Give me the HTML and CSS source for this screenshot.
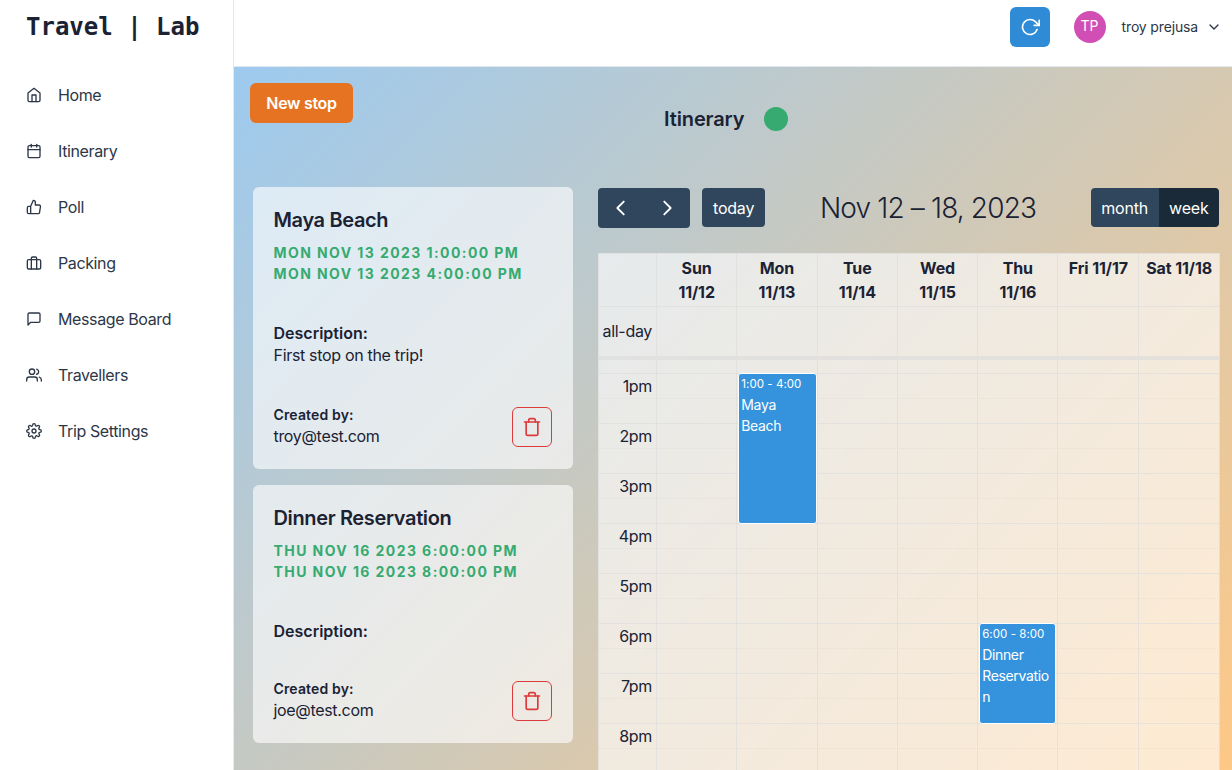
FILE: index.html
```html
<!DOCTYPE html>
<html lang="en">
<head>
    <meta charset="UTF-8">
    <meta name="viewport" content="width=device-width, initial-scale=1.0">
    <title>Travel | Lab</title>
    <link rel="stylesheet" href="styles.css">
</head>
<body>
    <aside class="sidebar">
        <div class="logo">Travel | Lab</div>
        <nav>
            <a class="nav-item">
                <svg class="icon" viewBox="0 0 24 24"><path d="M3 9l9-7 9 7v11a2 2 0 0 1-2 2H5a2 2 0 0 1-2-2z"/><polyline points="9 22 9 12 15 12 15 22"/></svg>
                Home
            </a>
            <a class="nav-item">
                <svg class="icon" viewBox="0 0 24 24"><rect x="3" y="4" width="18" height="18" rx="2"/><line x1="16" y1="2" x2="16" y2="6"/><line x1="8" y1="2" x2="8" y2="6"/><line x1="3" y1="10" x2="21" y2="10"/></svg>
                Itinerary
            </a>
            <a class="nav-item">
                <svg class="icon" viewBox="0 0 24 24"><path d="M14 9V5a3 3 0 0 0-3-3l-4 9v11h11.28a2 2 0 0 0 2-1.7l1.38-9a2 2 0 0 0-2-2.3zM7 22H4a2 2 0 0 1-2-2v-7a2 2 0 0 1 2-2h3"/></svg>
                Poll
            </a>
            <a class="nav-item">
                <svg class="icon" viewBox="0 0 24 24"><rect x="2" y="7" width="20" height="14" rx="2"/><path d="M16 21V5a2 2 0 0 0-2-2h-4a2 2 0 0 0-2 2v16"/></svg>
                Packing
            </a>
            <a class="nav-item">
                <svg class="icon" viewBox="0 0 24 24"><path d="M21 15a2 2 0 0 1-2 2H7l-4 4V5a2 2 0 0 1 2-2h14a2 2 0 0 1 2 2z"/></svg>
                Message Board
            </a>
            <a class="nav-item">
                <svg class="icon" viewBox="0 0 24 24"><path d="M17 21v-2a4 4 0 0 0-4-4H5a4 4 0 0 0-4 4v2"/><circle cx="9" cy="7" r="4"/><path d="M23 21v-2a4 4 0 0 0-3-3.87"/><path d="M16 3.13a4 4 0 0 1 0 7.75"/></svg>
                Travellers
            </a>
            <a class="nav-item">
                <svg class="icon" viewBox="0 0 24 24"><circle cx="12" cy="12" r="3"/><path d="M19.4 15a1.65 1.65 0 0 0 .33 1.82l.06.06a2 2 0 0 1 0 2.83 2 2 0 0 1-2.83 0l-.06-.06a1.65 1.65 0 0 0-1.82-.33 1.65 1.65 0 0 0-1 1.51V21a2 2 0 0 1-2 2 2 2 0 0 1-2-2v-.09A1.65 1.65 0 0 0 9 19.4a1.65 1.65 0 0 0-1.82.33l-.06.06a2 2 0 0 1-2.83 0 2 2 0 0 1 0-2.83l.06-.06a1.65 1.65 0 0 0 .33-1.82 1.65 1.65 0 0 0-1.51-1H3a2 2 0 0 1-2-2 2 2 0 0 1 2-2h.09A1.65 1.65 0 0 0 4.6 9a1.65 1.65 0 0 0-.33-1.82l-.06-.06a2 2 0 0 1 0-2.83 2 2 0 0 1 2.83 0l.06.06a1.65 1.65 0 0 0 1.82.33H9a1.65 1.65 0 0 0 1-1.51V3a2 2 0 0 1 2-2 2 2 0 0 1 2 2v.09a1.65 1.65 0 0 0 1 1.51 1.65 1.65 0 0 0 1.82-.33l.06-.06a2 2 0 0 1 2.83 0 2 2 0 0 1 0 2.83l-.06.06a1.65 1.65 0 0 0-.33 1.82V9a1.65 1.65 0 0 0 1.51 1H21a2 2 0 0 1 2 2 2 2 0 0 1-2 2h-.09a1.65 1.65 0 0 0-1.51 1z"/></svg>
                Trip Settings
            </a>
        </nav>
    </aside>

    <div class="page">
        <header class="topbar">
            <button class="refresh-btn">
                <svg class="icon" viewBox="0 0 24 24"><polyline points="23 4 23 10 17 10"/><path d="M20.49 15a9 9 0 1 1-2.12-9.36L23 10"/></svg>
            </button>
            <div class="avatar">TP</div>
            <span class="user-name">troy prejusa</span>
            <svg class="icon user-chevron" viewBox="0 0 24 24"><polyline points="6 9 12 15 18 9"/></svg>
        </header>

        <main class="main">
            <div class="title-row">
                <button class="new-stop">New stop</button>
                <div class="trip-title">
                    <h1>Itinerary</h1>
                    <span class="status-dot"></span>
                </div>
            </div>

            <div class="content">
                <section class="stops">
                    <article class="stop-card">
                        <h2>Maya Beach</h2>
                        <div class="stop-dates">
                            <div>Mon Nov 13 2023 1:00:00 PM</div>
                            <div>Mon Nov 13 2023 4:00:00 PM</div>
                        </div>
                        <div class="stop-label">Description:</div>
                        <p class="stop-text">First stop on the trip!</p>
                        <div class="stop-footer">
                            <div>
                                <div class="created-label">Created by:</div>
                                <div class="created-email">troy@test.com</div>
                            </div>
                            <button class="delete-btn">
                                <svg class="icon" viewBox="0 0 24 24"><polyline points="3 6 5 6 21 6"/><path d="M19 6v14a2 2 0 0 1-2 2H7a2 2 0 0 1-2-2V6m3 0V4a2 2 0 0 1 2-2h4a2 2 0 0 1 2 2v2"/></svg>
                            </button>
                        </div>
                    </article>

                    <article class="stop-card">
                        <h2>Dinner Reservation</h2>
                        <div class="stop-dates">
                            <div>Thu Nov 16 2023 6:00:00 PM</div>
                            <div>Thu Nov 16 2023 8:00:00 PM</div>
                        </div>
                        <div class="stop-label">Description:</div>
                        <p class="stop-text"></p>
                        <div class="stop-footer">
                            <div>
                                <div class="created-label">Created by:</div>
                                <div class="created-email">joe@test.com</div>
                            </div>
                            <button class="delete-btn">
                                <svg class="icon" viewBox="0 0 24 24"><polyline points="3 6 5 6 21 6"/><path d="M19 6v14a2 2 0 0 1-2 2H7a2 2 0 0 1-2-2V6m3 0V4a2 2 0 0 1 2-2h4a2 2 0 0 1 2 2v2"/></svg>
                            </button>
                        </div>
                    </article>
                </section>

                <section class="calendar">
                    <div class="cal-toolbar">
                        <div class="cal-left">
                            <div class="cal-group">
                                <button class="cal-btn cal-arrow"><svg class="icon" viewBox="0 0 24 24"><polyline points="15 5 8 12 15 19"/></svg></button>
                                <button class="cal-btn cal-arrow"><svg class="icon" viewBox="0 0 24 24"><polyline points="9 5 16 12 9 19"/></svg></button>
                            </div>
                            <button class="cal-btn cal-today">today</button>
                        </div>
                        <h2 class="cal-title">Nov 12 – 18, 2023</h2>
                        <div class="cal-group cal-views">
                            <button class="cal-btn">month</button>
                            <button class="cal-btn active">week</button>
                        </div>
                    </div>

                    <div class="cal-grid">
                        <div class="cal-head">
                            <div class="head-cell"></div>
                            <div class="head-cell">Sun<br>11/12</div>
                            <div class="head-cell">Mon<br>11/13</div>
                            <div class="head-cell">Tue<br>11/14</div>
                            <div class="head-cell">Wed<br>11/15</div>
                            <div class="head-cell">Thu<br>11/16</div>
                            <div class="head-cell">Fri 11/17</div>
                            <div class="head-cell">Sat 11/18</div>
                        </div>
                        <div class="cal-allday">
                            <div class="allday-cell allday-label">all-day</div>
                            <div class="allday-cell"></div>
                            <div class="allday-cell"></div>
                            <div class="allday-cell"></div>
                            <div class="allday-cell"></div>
                            <div class="allday-cell"></div>
                            <div class="allday-cell"></div>
                            <div class="allday-cell"></div>
                        </div>
                        <div class="cal-times">
                            <div class="slot slot-top"></div>
                            <div class="slot hour"><span>1pm</span></div>
                            <div class="slot half"></div>
                            <div class="slot hour"><span>2pm</span></div>
                            <div class="slot half"></div>
                            <div class="slot hour"><span>3pm</span></div>
                            <div class="slot half"></div>
                            <div class="slot hour"><span>4pm</span></div>
                            <div class="slot half"></div>
                            <div class="slot hour"><span>5pm</span></div>
                            <div class="slot half"></div>
                            <div class="slot hour"><span>6pm</span></div>
                            <div class="slot half"></div>
                            <div class="slot hour"><span>7pm</span></div>
                            <div class="slot half"></div>
                            <div class="slot hour"><span>8pm</span></div>
                            <div class="slot half"></div>
                            <div class="slot hour"></div>

                            <div class="day-cols">
                                <div class="day-col"></div>
                                <div class="day-col"></div>
                                <div class="day-col"></div>
                                <div class="day-col"></div>
                                <div class="day-col"></div>
                                <div class="day-col"></div>
                                <div class="day-col"></div>
                                <div class="day-col"></div>
                            </div>
                            <div class="day-cols day-events">
                                <div></div>
                                <div></div>
                                <div class="event-col">
                                    <div class="cal-event event-maya">
                                        <div class="event-time">1:00 - 4:00</div>
                                        <div class="event-title">Maya Beach</div>
                                    </div>
                                </div>
                                <div></div>
                                <div></div>
                                <div class="event-col">
                                    <div class="cal-event event-dinner">
                                        <div class="event-time">6:00 - 8:00</div>
                                        <div class="event-title">Dinner Reservation</div>
                                    </div>
                                </div>
                                <div></div>
                                <div></div>
                            </div>
                        </div>
                    </div>
                </section>
            </div>
        </main>
    </div>
</body>
</html>
```

FILE: styles.css
```css
* {
    margin: 0;
    padding: 0;
    box-sizing: border-box;
}

html, body {
    height: 100%;
}

body {
    display: flex;
    overflow: hidden;
    background: #fff;
    color: #1a2234;
    font-family: 'Inter', 'Liberation Sans', sans-serif;
    font-size: 16px;
    line-height: 24px;
    letter-spacing: -0.32px;
}

button {
    font-family: inherit;
    letter-spacing: inherit;
    cursor: pointer;
    border: none;
}

.icon {
    display: block;
    width: 16px;
    height: 16px;
    fill: none;
    stroke: currentColor;
    stroke-width: 2;
    stroke-linecap: round;
    stroke-linejoin: round;
}

/* Sidebar */
.sidebar {
    flex: 0 0 234px;
    border-right: 1px solid #e2e8f0;
    background: #fff;
}

.logo {
    height: 67px;
    padding: 9px 0 0 26px;
    font-family: 'DejaVu Sans Mono', 'Liberation Mono', monospace;
    font-size: 24px;
    font-weight: 700;
    line-height: 36px;
    letter-spacing: 0;
    white-space: pre;
}

.nav-item {
    display: flex;
    align-items: center;
    gap: 16px;
    height: 56px;
    padding-left: 26px;
    color: #2d3748;
    letter-spacing: -0.38px;
}

/* Top bar */
.page {
    flex: 1;
    min-width: 0;
    display: flex;
    flex-direction: column;
}

.topbar {
    flex: 0 0 67px;
    display: flex;
    align-items: flex-start;
    padding: 7px 10px 0 0;
    justify-content: flex-end;
    border-bottom: 1px solid #e2e8f0;
    background: #fff;
}

.refresh-btn {
    display: flex;
    align-items: center;
    justify-content: center;
    width: 40px;
    height: 40px;
    margin-right: 24px;
    border-radius: 6px;
    background: #2f8bd6;
    color: #fff;
}

.refresh-btn .icon {
    width: 20px;
    height: 20px;
}

.avatar {
    width: 32px;
    height: 32px;
    margin: 4px 16px 0 0;
    border-radius: 50%;
    background: #d14fb5;
    color: #fff;
    font-size: 14px;
    letter-spacing: 0;
    line-height: 30px;
    text-align: center;
}

.user-name {
    margin: 9px 8px 0 0;
    color: #2d3748;
    font-size: 14px;
    line-height: 21px;
    letter-spacing: -0.15px;
}

.user-chevron {
    margin-top: 12px;
    color: #2d3748;
}

/* Main area */
.main {
    flex: 1;
    min-height: 0;
    padding: 16px 12px 0 16px;
    background: linear-gradient(135deg, #9dcaef 0%, #fec886 100%);
}

.title-row {
    display: flex;
    align-items: flex-start;
    height: 104px;
}

.new-stop {
    width: 103px;
    height: 40px;
    border-radius: 6px;
    background: #e67322;
    color: #fff;
    font-size: 16px;
    font-weight: 600;
}

.trip-title {
    display: flex;
    align-items: center;
    gap: 20px;
    margin: 21px 0 0 311px;
}

.trip-title h1 {
    font-size: 20px;
    font-weight: 600;
    line-height: 30px;
    letter-spacing: -0.12px;
}

.status-dot {
    width: 24px;
    height: 24px;
    border-radius: 50%;
    background: #36aa70;
}

.content {
    display: flex;
    align-items: flex-start;
    gap: 25px;
    padding-left: 3px;
}

/* Stop cards */
.stops {
    flex: 0 0 320px;
    display: flex;
    flex-direction: column;
    gap: 16px;
}

.stop-card {
    padding: 20px 21px 22px 20.5px;
    border-radius: 6px;
    background: rgba(255, 255, 255, 0.62);
}

.stop-card h2 {
    font-size: 20px;
    font-weight: 600;
    line-height: 26px;
    letter-spacing: -0.36px;
}

.stop-dates {
    margin: 9px 0 39px;
    color: #36aa70;
    font-size: 14px;
    font-weight: 700;
    line-height: 21px;
    letter-spacing: 1.42px;
    text-transform: uppercase;
}

.stop-label {
    font-weight: 600;
    line-height: 20px;
    letter-spacing: 0;
}

.stop-text {
    margin-bottom: 38px;
}

.stop-footer {
    display: flex;
    align-items: flex-end;
    justify-content: space-between;
}

.created-label {
    font-size: 14px;
    font-weight: 600;
    line-height: 20px;
    letter-spacing: 0.15px;
}

.created-email {
    line-height: 22px;
}

.delete-btn {
    display: flex;
    align-items: center;
    justify-content: center;
    width: 40px;
    height: 40px;
    border: 1px solid #dc3b3b;
    border-radius: 6px;
    background: transparent;
    color: #dc3b3b;
}

.delete-btn .icon {
    width: 20px;
    height: 20px;
}

/* Calendar */
.calendar {
    flex: 0 0 622px;
    margin-top: 1px;
}

.cal-toolbar {
    display: flex;
    align-items: flex-start;
    justify-content: space-between;
    height: 40px;
    margin-bottom: 25px;
}

.cal-left {
    display: flex;
    align-items: flex-start;
    gap: 12px;
}

.cal-group {
    display: flex;
}

.cal-views {
    margin-right: 1px;
}

.cal-btn {
    height: 39px;
    padding: 0 10.5px;
    background: #2f465c;
    color: #fff;
    font-size: 16px;
    line-height: 24px;
    letter-spacing: -0.2px;
}

.cal-btn.active {
    background: #1a2a38;
}

.cal-group .cal-btn:first-child {
    border-radius: 4px 0 0 4px;
}

.cal-group .cal-btn:last-child {
    border-radius: 0 4px 4px 0;
}

.cal-today {
    padding: 0 11px;
    border-radius: 4px;
}

.cal-arrow {
    display: flex;
    align-items: center;
    justify-content: center;
    width: 46px;
    height: 40px;
}

.cal-arrow .icon {
    width: 22px;
    height: 22px;
}

.cal-title {
    font-size: 28px;
    font-weight: 350;
    line-height: 40px;
    letter-spacing: -0.85px;
}

.cal-grid {
    border-top: 1px solid rgba(221, 221, 221, 0.7);
    border-left: 1px solid rgba(221, 221, 221, 0.7);
    background: rgba(255, 255, 255, 0.62);
}

.cal-head,
.cal-allday,
.day-cols {
    display: grid;
    grid-template-columns: 58px repeat(5, 80.3px) 1fr 1fr;
}

.head-cell {
    height: 53px;
    padding-top: 2px;
    border-right: 1px solid rgba(221, 221, 221, 0.7);
    border-bottom: 1px solid rgba(221, 221, 221, 0.7);
    font-weight: 700;
    letter-spacing: -0.1px;
    text-align: center;
}

.allday-cell {
    height: 49px;
    border-right: 1px solid rgba(221, 221, 221, 0.7);
}

.allday-label {
    padding-right: 4px;
    line-height: 49px;
    text-align: right;
}

.cal-times {
    position: relative;
    border-top: 4px solid rgba(221, 221, 221, 0.7);
    overflow: hidden;
}

.slot {
    height: 25px;
    border-right: 1px solid rgba(221, 221, 221, 0.7);
}

.slot-top {
    height: 13px;
}

.slot.hour {
    border-top: 1px solid rgba(221, 221, 221, 0.7);
}

.slot.half {
    border-top: 1px dotted rgba(221, 221, 221, 0.7);
}

.slot span {
    display: block;
    width: 53px;
    text-align: right;
}

/* vertical column lines and event layer, over the slot rows */
.day-cols {
    position: absolute;
    top: 0;
    bottom: 0;
    left: 0;
    right: 0;
}

.day-col {
    border-right: 1px solid rgba(221, 221, 221, 0.7);
}

.event-col {
    position: relative;
}

.cal-event {
    position: absolute;
    left: 1px;
    right: 2px;
    padding: 2px 2px 0;
    border: 1px solid #fff;
    border-radius: 3px;
    background: #3593dd;
    color: #fff;
    font-size: 14px;
    line-height: 21px;
    letter-spacing: -0.34px;
    overflow-wrap: anywhere;
}

.event-maya {
    top: 13px;
    right: 1px;
    height: 151px;
}

.event-dinner {
    top: 263px;
    height: 101px;
}

.event-time {
    font-size: 11.5px;
    line-height: 17.5px;
    letter-spacing: 0.05px;
}
```
